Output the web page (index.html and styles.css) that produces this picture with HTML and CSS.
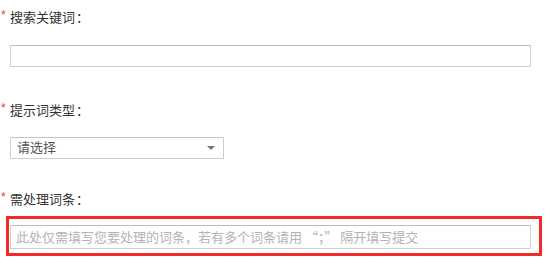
FILE: index.html
```html
<!DOCTYPE html>
<html lang="zh-CN">
<head>
<meta charset="utf-8">
<link rel="stylesheet" href="styles.css">
</head>
<body>
<form class="form">
  <div class="field">
    <div class="label"><span class="req">*</span><span class="label-text">搜索关键词<span class="colon">：</span></span></div>
    <div class="control"><input class="text-input" type="text"></div>
  </div>
  <div class="field field-2">
    <div class="label"><span class="req">*</span><span class="label-text">提示词类型<span class="colon">：</span></span></div>
    <div class="control"><div class="select"><span class="select-text">请选择</span><span class="caret"></span></div></div>
  </div>
  <div class="field field-3">
    <div class="label"><span class="req">*</span><span class="label-text">需处理词条<span class="colon">：</span></span></div>
    <div class="control control-hl">
      <input class="text-input" type="text" placeholder="此处仅需填写您要处理的词条，若有多个词条请用 “；” 隔开填写提交">
      <div class="highlight"></div>
    </div>
  </div>
</form>
</body>
</html>
```

FILE: styles.css
```css
html, body {
  margin: 0;
  padding: 0;
  background: #fff;
}
body {
  font-family: "Noto Sans CJK SC", "Noto Sans", sans-serif;
  font-size: 13px;
  color: #333;
  width: 550px;
  height: 268px;
  overflow: hidden;
}
.form {
  padding-top: 7px;
}
.field-2 {
  margin-top: 33px;
}
.field-3 {
  margin-top: 30px;
}
.label {
  display: flex;
  align-items: flex-start;
  height: 20px;
  line-height: 20px;
}
.req {
  width: 10px;
  padding-left: 1px;
  box-sizing: border-box;
  color: #e4393c;
  font-size: 12px;
  line-height: 17px;
  font-family: "Liberation Sans", sans-serif;
}
.label-text {
  color: #333;
  font-size: 13px;
}
.colon {
  font-family: "Noto Sans CJK TC", "Noto Sans CJK SC", sans-serif;
  margin-left: 1px;
}
.control {
  padding-left: 10px;
  margin-top: 18px;
}
.field-2 .control {
  margin-top: 17px;
}
.field-3 .control {
  margin-top: 16px;
}
.control-hl {
  position: relative;
}
.text-input {
  display: block;
  box-sizing: border-box;
  width: 521px;
  height: 22px;
  margin: 0;
  padding: 0 5px;
  border: 1px solid #cfcfcf;
  border-top-color: #bdbdbd;
  border-radius: 0;
  font-family: "Noto Sans CJK SC", "Noto Sans", sans-serif;
  font-size: 13px;
  color: #333;
  background: #fff;
  outline: none;
}
.field-3 .text-input {
  height: 24px;
  padding-bottom: 2px;
}
.text-input::placeholder {
  color: #b3b3b3;
}
.select {
  box-sizing: border-box;
  width: 214px;
  height: 22px;
  border: 1px solid #cfcfcf;
  border-top-color: #c4c4c4;
  display: flex;
  align-items: center;
  justify-content: space-between;
  padding: 0 8px 0 6px;
  background: #fff;
}
.select-text {
  color: #555;
  font-size: 13px;
  line-height: 18px;
  margin-top: -2px;
}
.caret {
  width: 0;
  height: 0;
  border-left: 4px solid transparent;
  border-right: 4px solid transparent;
  border-top: 4px solid #777;
  margin-top: 0;
}
.highlight {
  position: absolute;
  left: 6px;
  top: -9px;
  width: 536px;
  height: 40px;
  box-sizing: border-box;
  border: 3px solid #f02a2a;
  pointer-events: none;
}
```
